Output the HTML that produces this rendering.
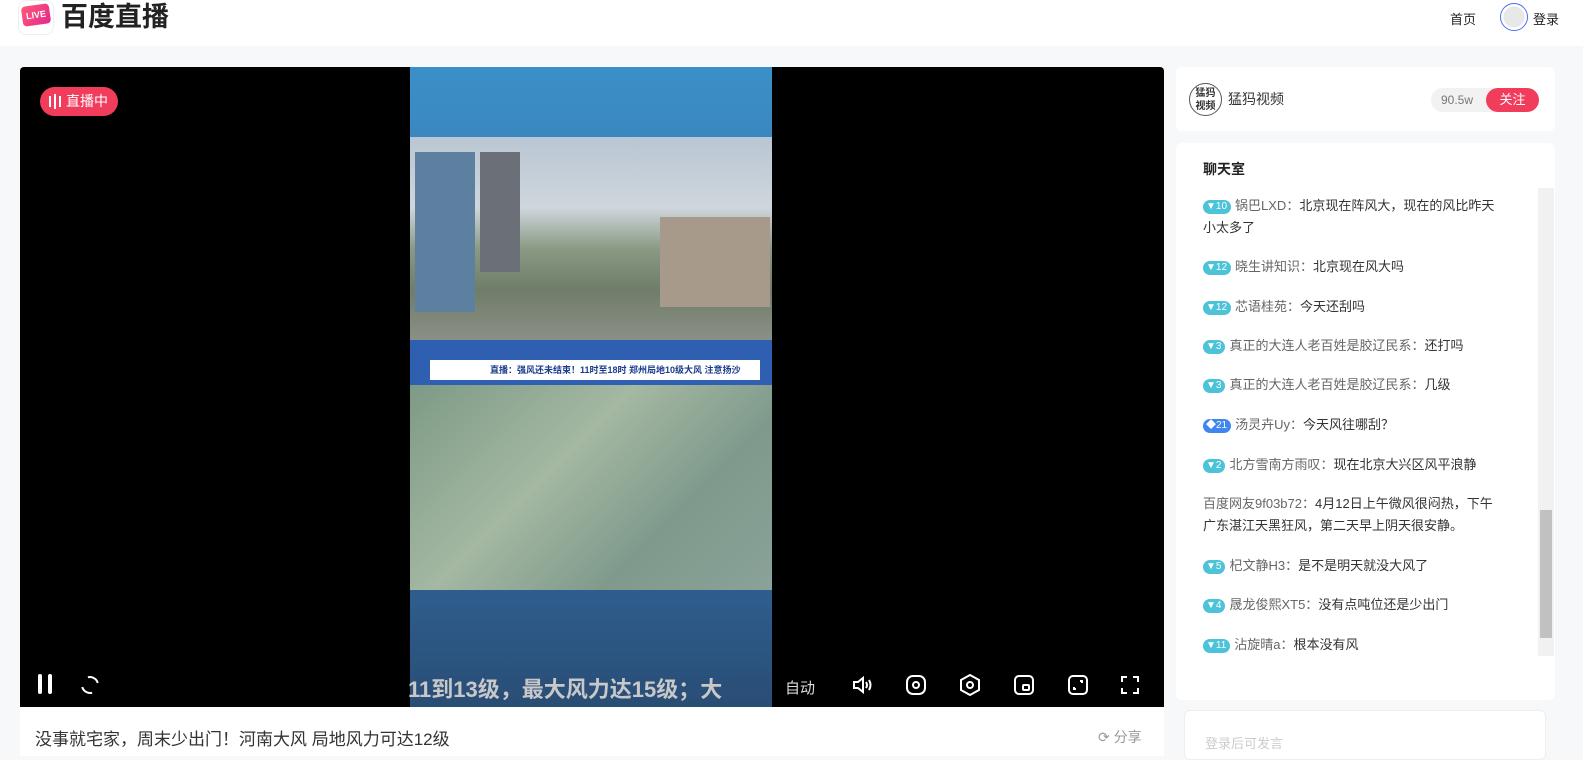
<!DOCTYPE html><html><head><meta charset="utf-8"><style>
*{margin:0;padding:0;box-sizing:border-box}
body{width:1583px;height:756px;overflow:hidden;background:#f7f8fa;font-family:"Liberation Sans","Noto Sans CJK SC",sans-serif;position:relative;color:#333}
.hdr{position:absolute;left:0;top:0;width:1583px;height:46px;background:#fff}
.abs{position:absolute}
.msg{position:absolute;left:1203px;font-size:13px;color:#333;line-height:22px;width:300px}
.msg .n{color:#666}
.lv{display:inline-block;height:14px;border-radius:7px;background:#4cc3d9;color:#fff;font-size:10px;line-height:14px;padding:0 4px 0 3px;margin-right:4px;vertical-align:1px}
.ic{position:absolute;top:673px;width:24px;height:24px}
</style></head><body>
<div class="hdr">
 <div class="abs" style="left:18px;top:0;width:36px;height:35px;border-radius:8px;border:1px solid #eee;background:#fff"></div>
 <div class="abs" style="left:22px;top:5px;width:28px;height:20px;background:linear-gradient(135deg,#ff5a7a,#e4288a);border-radius:4px;transform:rotate(-8deg);color:#fff;font-size:9px;font-weight:bold;text-align:center;line-height:20px">LIVE</div>
 <div class="abs" style="left:61px;top:1px;font-size:27px;font-weight:bold;color:#222;line-height:32px">百度直播</div>
 <div class="abs" style="left:1450px;top:9px;font-size:13px;color:#222">首页</div>
 <div class="abs" style="left:1500px;top:3px;width:28px;height:28px;border-radius:50%;border:1px solid #4e6ef2;background:radial-gradient(#e8e8e8 55%,#fff 60%)"></div>
 <div class="abs" style="left:1533px;top:9px;font-size:13px;color:#222">登录</div>
</div>
<div class="abs" style="left:20px;top:67px;width:1144px;height:640px;background:#000;border-radius:4px 4px 0 0;overflow:hidden">
 <div class="abs" style="left:390px;top:0;width:362px;height:640px;background:linear-gradient(#3b8fc7,#3a7ab5 30%,#2f5f90 80%,#294d75)"></div>
 <div class="abs" style="left:390px;top:70px;width:362px;height:203px;background:linear-gradient(#b9c6d3 0,#cfd6dc 35%,#8a9a84 55%,#6f7d69 75%,#8b8f86)"></div>
 <div class="abs" style="left:395px;top:85px;width:60px;height:160px;background:#5d7fa0"></div>
 <div class="abs" style="left:460px;top:85px;width:40px;height:120px;background:#6b6f77"></div>
 <div class="abs" style="left:640px;top:150px;width:110px;height:90px;background:#a79a8a"></div>
 <div class="abs" style="left:390px;top:273px;width:362px;height:45px;background:#2e5fb0"></div>
 <div class="abs" style="left:410px;top:293px;width:330px;height:20px;background:#fff;font-size:9px;color:#1a3c8f;font-weight:bold;line-height:20px;padding-left:60px">直播：强风还未结束！11时至18时 郑州局地10级大风 注意扬沙</div>
 <div class="abs" style="left:390px;top:318px;width:362px;height:205px;background:linear-gradient(135deg,#7d9a86,#a4b8a2 40%,#7f9a8c 70%,#8aa299)"></div>
 <div class="abs" style="left:20px;top:20px;width:78px;height:29px;border-radius:15px;background:#f23c5c;color:#fff;font-size:14px;line-height:29px;padding-left:26px">直播中</div>
 <div class="abs" style="left:29px;top:29px;width:12px;height:11px;border-left:2px solid #fff;border-right:2px solid #fff"></div>
 <div class="abs" style="left:34px;top:27px;width:2px;height:15px;background:#fff"></div>
 <div class="abs" style="left:388px;top:605px;font-size:22px;font-weight:bold;color:#c8c8c8;white-space:nowrap;width:364px;overflow:hidden">11到13级，最大风力达15级；大</div>
 <div class="abs" style="left:765px;top:610px;font-size:15px;color:#ddd">自动</div>
</div>
<div class="abs" style="left:38px;top:674px;width:4px;height:20px;background:#fff;border-radius:2px"></div>
<div class="abs" style="left:48px;top:674px;width:4px;height:20px;background:#fff;border-radius:2px"></div>
<div class="abs" style="left:81px;top:676px;width:18px;height:18px;border:2px solid #fff;border-radius:50%;border-right-color:transparent;border-left-color:transparent;transform:rotate(30deg)"></div>
<svg class="ic" style="left:850px" viewBox="0 0 24 24" fill="none" stroke="#fff" stroke-width="2"><path d="M4 9h4l5-4v14l-5-4H4z"/><path d="M16 9q2 3 0 6M19 7q3 5 0 10"/></svg>
<svg class="ic" style="left:904px" viewBox="0 0 24 24" fill="none" stroke="#fff" stroke-width="2"><rect x="3" y="3" width="18" height="18" rx="6"/><circle cx="12" cy="12" r="3"/></svg>
<svg class="ic" style="left:958px" viewBox="0 0 24 24" fill="none" stroke="#fff" stroke-width="2"><path d="M12 2l9 5v10l-9 5-9-5V7z"/><circle cx="12" cy="12" r="3"/></svg>
<svg class="ic" style="left:1012px" viewBox="0 0 24 24" fill="none" stroke="#fff" stroke-width="2"><rect x="3" y="3" width="18" height="18" rx="4"/><rect x="11" y="12" width="6" height="5" rx="1"/></svg>
<svg class="ic" style="left:1066px" viewBox="0 0 24 24" fill="none" stroke="#fff" stroke-width="2"><rect x="3" y="3" width="18" height="18" rx="4"/><path d="M8 14v2h2M16 10V8h-2"/></svg>
<svg class="ic" style="left:1118px" viewBox="0 0 24 24" fill="none" stroke="#fff" stroke-width="2"><path d="M4 9V4h5M15 4h5v5M20 15v5h-5M9 20H4v-5"/></svg>
<div class="abs" style="left:20px;top:707px;width:1144px;height:49px;background:#fff"></div>
<div class="abs" style="left:35px;top:725px;font-size:17px;color:#333">没事就宅家，周末少出门！河南大风 局地风力可达12级</div>
<div class="abs" style="left:1098px;top:727px;font-size:14px;color:#999">⟳ 分享</div>
<div class="abs" style="left:1176px;top:67px;width:379px;height:64px;background:#fff;border-radius:6px"></div>
<div class="abs" style="left:1189px;top:83px;width:33px;height:33px;border-radius:50%;border:1px solid #555;font-size:10px;line-height:13px;text-align:center;padding-top:3px;font-weight:bold">猛犸<br>视频</div>
<div class="abs" style="left:1228px;top:89px;font-size:14px;color:#333">猛犸视频</div>
<div class="abs" style="left:1431px;top:88px;width:108px;height:24px;border-radius:12px;background:#f2f2f2;font-size:12px;color:#777;line-height:24px;padding-left:10px">90.5w</div>
<div class="abs" style="left:1486px;top:88px;width:53px;height:24px;border-radius:12px;background:#f23c5c;color:#fff;font-size:13px;line-height:24px;text-align:center">关注</div>
<div class="abs" style="left:1176px;top:143px;width:379px;height:557px;background:#fff;border-radius:6px"></div>
<div class="abs" style="left:1203px;top:159px;font-size:14px;font-weight:bold;color:#222">聊天室</div>
<div class="abs" style="left:1538px;top:188px;width:16px;height:468px;background:#f1f1f1"></div>
<div class="abs" style="left:1540px;top:510px;width:12px;height:128px;background:#c1c1c1"></div>
<div class="msg" style="top:195px"><span class="lv">▼10</span><span class="n">锅巴LXD：</span>北京现在阵风大，现在的风比昨天小太多了</div>
<div class="msg" style="top:256px"><span class="lv">▼12</span><span class="n">晓生讲知识：</span>北京现在风大吗</div>
<div class="msg" style="top:296px"><span class="lv">▼12</span><span class="n">芯语桂苑：</span>今天还刮吗</div>
<div class="msg" style="top:335px"><span class="lv">▼3</span><span class="n">真正的大连人老百姓是胶辽民系：</span>还打吗</div>
<div class="msg" style="top:374px"><span class="lv">▼3</span><span class="n">真正的大连人老百姓是胶辽民系：</span>几级</div>
<div class="msg" style="top:414px"><span class="lv" style="background:#3f86f0">◆21</span><span class="n">汤灵卉Uy：</span>今天风往哪刮？</div>
<div class="msg" style="top:454px"><span class="lv">▼2</span><span class="n">北方雪南方雨叹：</span>现在北京大兴区风平浪静</div>
<div class="msg" style="top:493px"><span class="n">百度网友9f03b72：</span>4月12日上午微风很闷热，下午广东湛江天黑狂风，第二天早上阴天很安静。</div>
<div class="msg" style="top:555px"><span class="lv">▼5</span><span class="n">杞文静H3：</span>是不是明天就没大风了</div>
<div class="msg" style="top:594px"><span class="lv">▼4</span><span class="n">晟龙俊熙XT5：</span>没有点吨位还是少出门</div>
<div class="msg" style="top:634px"><span class="lv">▼11</span><span class="n">沾旋晴a：</span>根本没有风</div>
<div class="abs" style="left:1184px;top:710px;width:362px;height:50px;border:1px solid #eee;border-radius:6px;background:#fff;font-size:13px;color:#ccc;padding:22px 0 0 20px">登录后可发言</div>
</body></html>
